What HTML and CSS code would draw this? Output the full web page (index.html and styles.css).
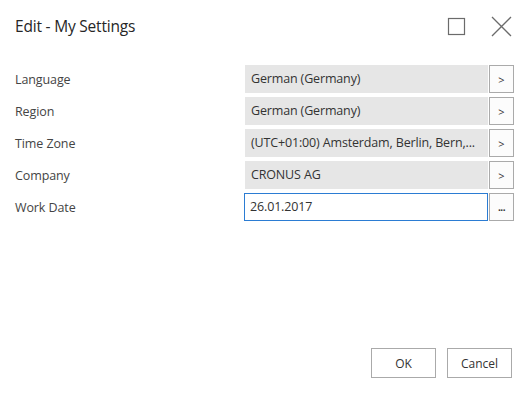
FILE: index.html
```html
<!DOCTYPE html>
<html lang="en">
<head>
  <meta charset="UTF-8">
  <title>Edit - My Settings</title>
  <link rel="stylesheet" href="styles.css">
</head>
<body>
  <div class="dialog">
    <header class="dialog-head">
      <div class="title">Edit - My Settings</div>
      <div class="head-icons">
        <svg class="icon" width="19" height="19" viewBox="0 0 19 19"><rect x="1.5" y="1.5" width="16" height="16" fill="none" stroke="#6b6b6b" stroke-width="1.2"/></svg>
        <svg class="icon" width="21" height="21" viewBox="0 0 21 21"><path d="M1 1 L20 20 M20 1 L1 20" stroke="#6b6b6b" stroke-width="1.3" fill="none"/></svg>
      </div>
    </header>

    <div class="form">
      <div class="row">
        <label>Language</label>
        <div class="field">German (Germany)</div>
        <button class="lookup">&gt;</button>
      </div>
      <div class="row">
        <label>Region</label>
        <div class="field">German (Germany)</div>
        <button class="lookup">&gt;</button>
      </div>
      <div class="row">
        <label>Time Zone</label>
        <div class="field">(UTC+01:00) Amsterdam, Berlin, Bern,...</div>
        <button class="lookup">&gt;</button>
      </div>
      <div class="row">
        <label>Company</label>
        <div class="field">CRONUS AG</div>
        <button class="lookup">&gt;</button>
      </div>
      <div class="row">
        <label>Work Date</label>
        <div class="field editable">26.01.2017</div>
        <button class="lookup dots">...</button>
      </div>
    </div>

    <footer class="actions">
      <button class="action">OK</button>
      <button class="action">Cancel</button>
    </footer>
  </div>
</body>
</html>
```

FILE: styles.css
```css
body {
  margin: 0;
  background: #fff;
  font-family: "Open Sans", "Noto Sans", Arial, sans-serif;
  color: #333;
}
.dialog {
  width: 529px;
  height: 394px;
  box-sizing: border-box;
  display: flex;
  flex-direction: column;
  padding: 0 15px 16px 15px;
}
.dialog-head {
  display: flex;
  justify-content: space-between;
  align-items: center;
  height: 52px;
}
.title {
  font-size: 15.5px;
  color: #262626;
  letter-spacing: -0.2px;
}
.head-icons {
  display: flex;
  align-items: center;
  gap: 25px;
  margin-right: 2px;
  padding-top: 1px;
}
.icon {
  display: block;
}
.form {
  margin-top: 13px;
  display: flex;
  flex-direction: column;
  gap: 4px;
}
.row {
  display: flex;
  align-items: center;
  height: 28px;
}
.row label {
  width: 230px;
  font-size: 12.5px;
  color: #444;
  letter-spacing: -0.1px;
}
.field {
  width: 243px;
  height: 28px;
  box-sizing: border-box;
  background: #e6e6e6;
  padding: 0 6px;
  font-size: 12.5px;
  line-height: 28px;
  letter-spacing: -0.15px;
  color: #333;
  white-space: nowrap;
  overflow: hidden;
}
.field.editable {
  background: #fff;
  border: 1px solid #2b7cd3;
  line-height: 26px;
  padding: 0 5px;
  margin-left: -1px;
  width: 244px;
}
.lookup {
  width: 25px;
  height: 28px;
  margin-left: 1px;
  box-sizing: border-box;
  border: 1px solid #aaa;
  background: #fcfcfc;
  color: #333;
  font-family: inherit;
  font-size: 11px;
  padding: 0;
}
.lookup.dots {
  font-size: 10px;
  font-weight: bold;
  letter-spacing: -0.5px;
}
.actions {
  margin-top: auto;
  display: flex;
  justify-content: flex-end;
  gap: 11px;
  margin-right: 2px;
}
.action {
  width: 65px;
  height: 30px;
  border: 1px solid #aaa;
  background: #fff;
  font-family: inherit;
  font-size: 12px;
  color: #333;
}
```
